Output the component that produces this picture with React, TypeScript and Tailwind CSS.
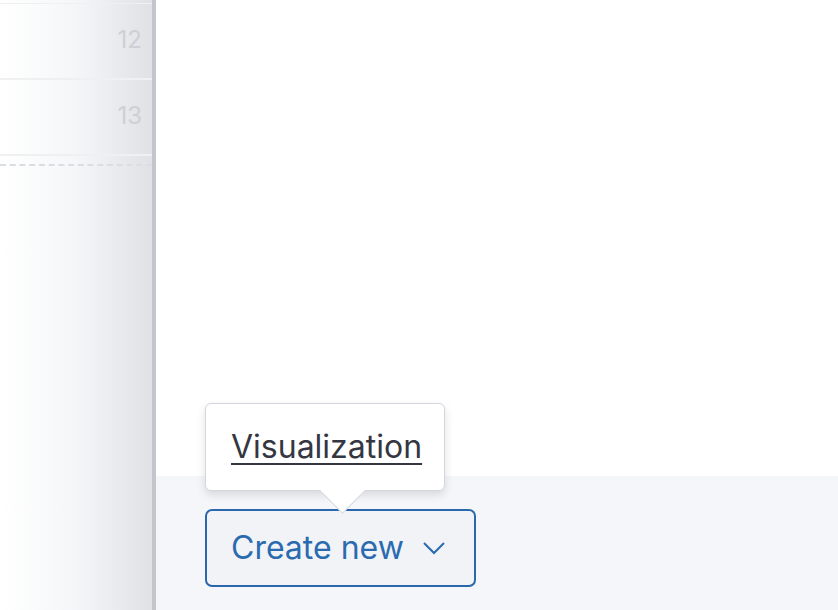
import React from 'react';

const rows = ['12', '13'];

export default function App() {
    return (
        <div className="w-[838px] h-[610px] flex bg-white overflow-hidden" style={{ fontFamily: 'Inter, "Noto Sans", sans-serif' }}>
            {/* panel lateral con filas */}
            <div className="w-[156px] h-full flex flex-col bg-gradient-to-r from-white via-[#f5f6f8] to-[#dfe1e5] border-r-[4px] border-[#c3c6cd] shrink-0">
                <div className="h-[4px] border-b border-[#eef0f2]" />
                {rows.map((r) => (
                    <div key={r} className="h-[76px] border-b-2 border-[#eef0f2] flex items-center justify-end pr-[10px] pb-[3px] text-[24px] text-[#cdd0d5]">
                        {r}
                    </div>
                ))}
                <div className="mt-[8px] border-t-2 border-dashed border-[#dadde2]" />
            </div>

            <div className="flex-1 flex flex-col">
                <div className="flex-1 bg-white" />
                <div className="h-[134px] bg-[#f4f6f9] relative px-[49px] pt-[33px]">
                    <button className="relative h-[78px] w-[271px] rounded-[7px] border-2 border-[#2a67ad] bg-[#f1f3f7] flex items-center pl-[24px] gap-[19px] text-[#2a6bb0] text-[32px]">
                        <span>Create new</span>
                        <svg width="22" height="13" viewBox="0 0 22 13" fill="none" stroke="#2a6bb0" strokeWidth="2">
                            <path d="M1 1l10 10L21 1" />
                        </svg>
                    </button>

                    <div className="absolute left-[49px] top-[-73px] w-[240px] h-[88px] bg-white rounded-[6px] border border-[#d3d6dc] shadow-[0_4px_10px_rgba(0,0,0,0.12)] flex items-center pl-[25px]">
                        <span className="text-[32px] text-[#343741] underline underline-offset-[5px] decoration-2">Visualization</span>
                        <div className="absolute left-[120px] bottom-[-17px] w-[33px] h-[33px] bg-white rotate-45 border-r border-b border-[#d3d6dc]" />
                    </div>
                </div>
            </div>
        </div>
    );
}
